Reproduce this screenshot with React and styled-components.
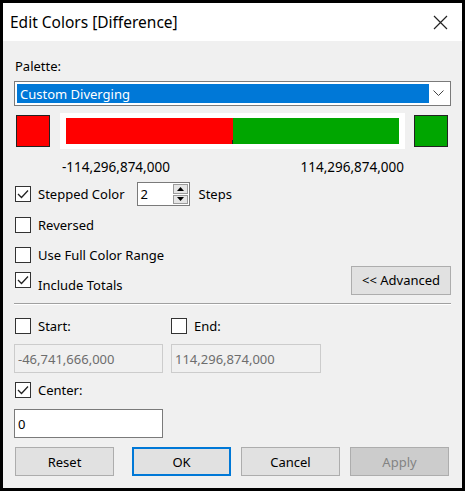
import React from 'react';
import styled, { createGlobalStyle } from 'styled-components';

const GlobalStyle = createGlobalStyle`
  html, body {
    margin: 0;
    padding: 0;
    background: #ffffff;
  }
  body {
    font-family: "Noto Sans", "Open Sans", sans-serif;
    font-size: 13px;
    color: #000;
  }
`;

const Dialog = styled.div`
  width: 465px;
  height: 491px;
  box-sizing: border-box;
  border: 3px solid #000;
  background: #f0f0f0;
  display: flex;
  flex-direction: column;
`;

const TitleBar = styled.div`
  height: 38px;
  background: #fff;
  display: flex;
  align-items: center;
  justify-content: space-between;
  padding: 0 14px 0 7px;
  font-size: 15.5px;
`;

const Body = styled.div`
  flex: 1;
  padding: 0 11px 0 11px;
  display: flex;
  flex-direction: column;
`;

const Row = styled.div`
  display: flex;
  align-items: center;
  height: ${p => p.$h || 20}px;
  margin-top: ${p => p.$mt || 0}px;
`;

const Column = styled.div`
  display: flex;
  align-items: center;
  width: ${p => p.$w}px;
  height: 100%;
`;

const Label = styled.span`
  margin-left: ${p => p.$ml || 0}px;
  margin-right: ${p => p.$mr || 0}px;
  margin-top: ${p => p.$drop || 0}px;
  font-size: ${p => p.$fs || 13}px;
  white-space: nowrap;
`;

const Select = styled.div`
  width: 437px;
  height: 25px;
  box-sizing: border-box;
  border: 1px solid #7a7a7a;
  background: #fff;
  padding: 2px;
  display: flex;
  align-items: center;
`;

const Highlight = styled.div`
  width: 412px;
  height: 100%;
  background: #0078d7;
  color: #fff;
  display: flex;
  align-items: center;
  padding-left: 3px;
  box-sizing: border-box;
`;

const Chevron = styled.div`
  flex: 1;
  display: flex;
  justify-content: center;
`;

const Swatch = styled.div`
  width: 34px;
  height: 32px;
  box-sizing: border-box;
  border: 1px solid #222;
  background: ${p => p.$color};
  margin-left: ${p => p.$ml || 0}px;
`;

const RampFrame = styled.div`
  width: 345px;
  height: 36px;
  box-sizing: border-box;
  background: #fff;
  padding: 5px 6px;
  display: flex;
  margin-left: 10px;
`;

const RampPart = styled.div`
  flex: 1;
  background: ${p => p.$color};
  position: relative;
`;

const Tick = styled.div`
  position: absolute;
  left: -1px;
  bottom: 0;
  width: 1px;
  height: 4px;
  background: #222;
`;

const BoxOuter = styled.div`
  width: 16px;
  height: 16px;
  box-sizing: border-box;
  border: 1px solid #333;
  background: #fff;
  display: flex;
  align-items: center;
  justify-content: center;
  margin-left: ${p => p.$ml || 0}px;
  flex-shrink: 0;
`;

const SpinBox = styled.div`
  width: 53px;
  height: 24px;
  box-sizing: border-box;
  border: 1px solid #7a7a7a;
  background: #fff;
  display: flex;
  margin-left: 12px;
`;

const SpinValue = styled.div`
  flex: 1;
  display: flex;
  align-items: center;
  padding-left: 3px;
`;

const SpinButtons = styled.div`
  width: 15px;
  display: flex;
  flex-direction: column;
  padding: 1px 1px 1px 0;
  gap: 1px;
`;

const SpinButton = styled.div`
  flex: 1;
  background: #e5e5e5;
  border: 1px solid #9a9a9a;
  display: flex;
  align-items: center;
  justify-content: center;
`;

const Button = styled.div`
  width: ${p => p.$w || 99}px;
  height: 29px;
  box-sizing: border-box;
  border: ${p => p.$primary ? '2px solid #0078d7' : '1px solid #adadad'};
  background: ${p => p.$disabled ? '#cccccc' : '#e1e1e1'};
  color: ${p => p.$disabled ? '#838383' : '#000'};
  display: flex;
  align-items: center;
  justify-content: center;
  margin-left: ${p => p.$ml || 0}px;
`;

const Separator = styled.div`
  height: 1px;
  background: #a0a0a0;
  border-bottom: 1px solid #fff;
  margin-top: ${p => p.$mt || 0}px;
`;

const TextField = styled.div`
  width: ${p => p.$w || 149}px;
  height: 29px;
  box-sizing: border-box;
  border: 1px solid ${p => p.$disabled ? '#cccccc' : '#7a7a7a'};
  background: ${p => p.$disabled ? '#f0f0f0' : '#fff'};
  color: ${p => p.$disabled ? '#6d6d6d' : '#000'};
  display: flex;
  align-items: center;
  padding-left: 3px;
  margin-left: ${p => p.$ml || 0}px;
`;

const Spacer = styled.div`
  flex: 1;
`;

const Check = ({ checked, ml }) => (
  <BoxOuter $ml={ml}>
    {checked && (
      <svg width="12" height="10" viewBox="0 0 12 10">
        <polyline points="1,5 4.5,8.5 11,1.5" fill="none" stroke="#222" strokeWidth="1.3" />
      </svg>
    )}
  </BoxOuter>
);

const CheckRow = ({ checked, label, mt, h = 20, children }) => (
  <Row $mt={mt} $h={h}>
    <Check checked={checked} ml={1} />
    <Label $ml={7}>{label}</Label>
    {children}
  </Row>
);

export default function App() {
  return (
    <>
      <GlobalStyle />
      <Dialog>
        <TitleBar>
          <span>Edit Colors [Difference]</span>
          <svg width="15" height="15" viewBox="0 0 15 15">
            <path d="M1 1 L14 14 M14 1 L1 14" stroke="#222" strokeWidth="1.2" />
          </svg>
        </TitleBar>
        <Body>
          <Row $mt={15} $h={20}>
            <Label $ml={1}>Palette:</Label>
          </Row>
          <Row $mt={5} $h={25}>
            <Select>
              <Highlight>Custom Diverging</Highlight>
              <Chevron>
                <svg width="11" height="7" viewBox="0 0 11 7">
                  <polyline points="0.5,0.5 5.5,5.5 10.5,0.5" fill="none" stroke="#444" strokeWidth="1" />
                </svg>
              </Chevron>
            </Select>
          </Row>
          <Row $mt={7} $h={36}>
            <Swatch $color="#ff0000" $ml={2} />
            <RampFrame>
              <RampPart $color="#ff0000" />
              <RampPart $color="#00a600">
                <Tick />
              </RampPart>
            </RampFrame>
            <Swatch $color="#00a600" $ml={9} />
          </Row>
          <Row $mt={9} $h={18}>
            <Label $ml={48} $fs={13.5}>-114,296,874,000</Label>
            <Spacer />
            <Label $mr={47} $fs={13.5}>114,296,874,000</Label>
          </Row>
          <CheckRow checked label="Stepped Color" mt={6} h={24}>
            <SpinBox>
              <SpinValue>2</SpinValue>
              <SpinButtons>
                <SpinButton>
                  <svg width="7" height="4" viewBox="0 0 7 4"><polygon points="0,4 3.5,0 7,4" fill="#000" /></svg>
                </SpinButton>
                <SpinButton>
                  <svg width="7" height="4" viewBox="0 0 7 4"><polygon points="0,0 3.5,4 7,0" fill="#000" /></svg>
                </SpinButton>
              </SpinButtons>
            </SpinBox>
            <Label $ml={9}>Steps</Label>
          </CheckRow>
          <CheckRow label="Reversed" mt={9} />
          <CheckRow label="Use Full Color Range" mt={10} />
          <Row $mt={0} $h={30}>
            <Check checked ml={1} />
            <Label $ml={7} $drop={10}>Include Totals</Label>
            <Spacer />
            <Button $w={100}>&lt;&lt; Advanced</Button>
          </Row>
          <Separator $mt={8} />
          <Row $mt={11} $h={20}>
            <Column $w={157}>
              <Check ml={1} />
              <Label $ml={7}>Start:</Label>
            </Column>
            <Column $w={150}>
              <Check />
              <Label $ml={7}>End:</Label>
            </Column>
          </Row>
          <Row $mt={8} $h={29}>
            <TextField $disabled $ml={0}>-46,741,666,000</TextField>
            <TextField $disabled $ml={8} $w={150}>114,296,874,000</TextField>
          </Row>
          <CheckRow checked label="Center:" mt={7} />
          <Row $mt={9} $h={29}>
            <TextField>0</TextField>
          </Row>
          <Row $mt={9} $h={29}>
            <Button $ml={1}>Reset</Button>
            <Button $ml={18} $primary>OK</Button>
            <Button $ml={10}>Cancel</Button>
            <Button $ml={10} $disabled>Apply</Button>
          </Row>
        </Body>
      </Dialog>
    </>
  );
}
